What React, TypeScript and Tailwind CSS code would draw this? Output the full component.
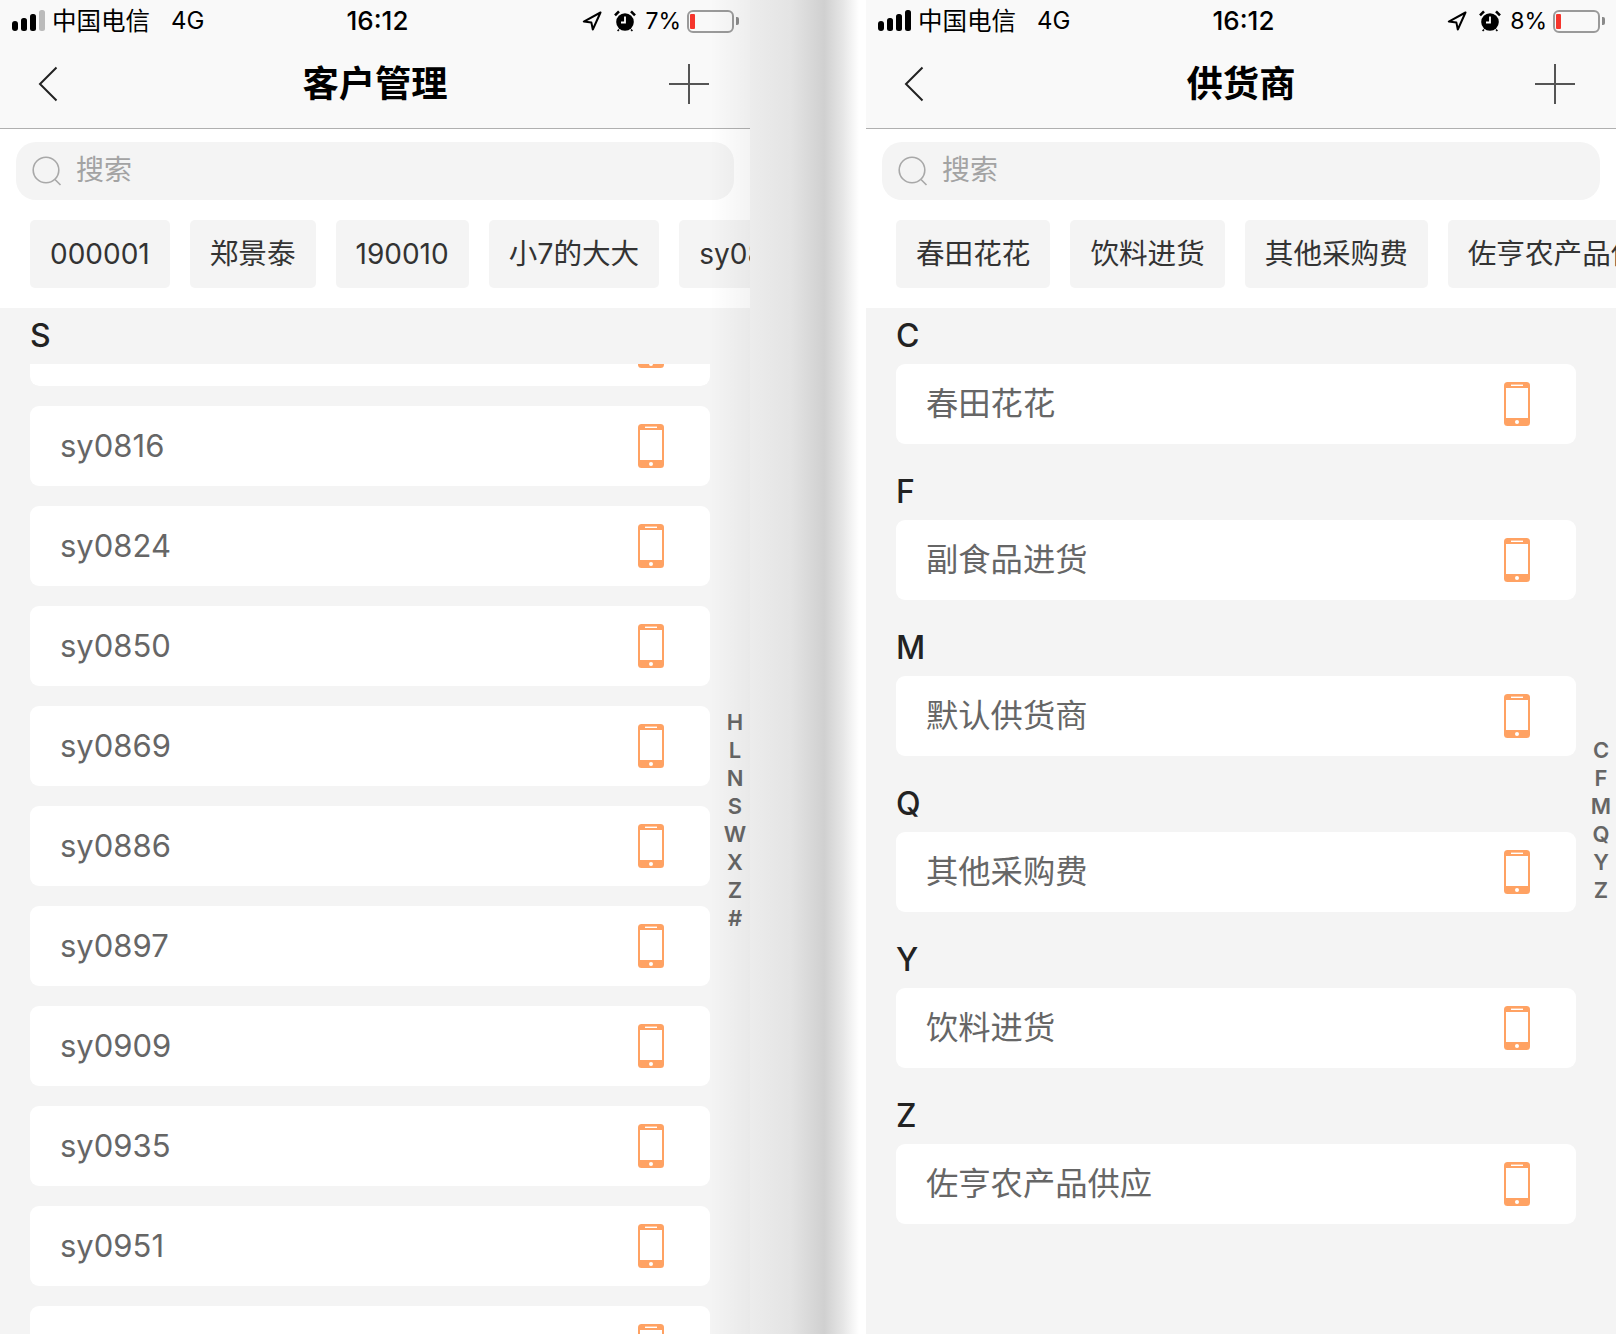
const FONT = "font-['Inter','Noto_Sans_CJK_SC',sans-serif]";

function SignalIcon({ full }: { full: boolean }) {
  return (
    <svg width="34" height="22" viewBox="0 0 34 22" className="shrink-0">
      <rect x="0" y="11" width="6" height="10" rx="3" fill="#000" />
      <rect x="9" y="8" width="6" height="13" rx="2.5" fill="#000" />
      <rect x="18" y="4" width="6" height="17" rx="2.5" fill="#000" />
      <rect x="27" y="0" width="6" height="21" rx="2.5" fill={full ? "#000" : "#bbb"} />
    </svg>
  );
}

function ArrowIcon() {
  return (
    <svg width="20" height="20" viewBox="0 0 20 20" className="shrink-0">
      <path d="M18.5 1.5 1.8 10.6l7.6 1 1.4 6.9z" fill="none" stroke="#000" strokeWidth="2" strokeLinejoin="round" />
    </svg>
  );
}

function AlarmIcon() {
  return (
    <svg width="22" height="22" viewBox="0 0 22 22" className="shrink-0">
      <circle cx="11" cy="12" r="8.8" fill="#000" />
      <path d="M11 6.5V12.5H7" fill="none" stroke="#fff" strokeWidth="1.8" />
      <path d="M1 5.4 5 1.4M21 5.4 17 1.4" fill="none" stroke="#000" strokeWidth="2.6" />
      <path d="M5 19.5 3.6 21M17 19.5 18.4 21" fill="none" stroke="#000" strokeWidth="1.6" />
    </svg>
  );
}

function BatteryIcon() {
  return (
    <div className="flex items-center gap-[2px]">
      <div className="flex h-[23px] w-[47px] items-center rounded-[6px] border-2 border-[#9a9a9a] pl-[1px]">
        <div className="h-[15px] w-[5px] rounded-[1px] bg-[#f5352c]" />
      </div>
      <div className="h-[8px] w-[3px] rounded-r-[2px] bg-[#8a8a8a]" />
    </div>
  );
}

function StatusBar({ battery, full }: { battery: string; full: boolean }) {
  return (
    <div className="grid h-10 grid-cols-[1fr_auto_1fr] items-center pl-3 pr-[11px] pt-[2px] text-[24.5px] leading-none text-black">
      <div className="flex items-center">
        <SignalIcon full={full} />
        <span className="ml-[6px]">中国电信</span>
        <span className="ml-[21px] text-[24px]">4G</span>
      </div>
      <span className="ml-[4px] text-[26px] font-medium">16:12</span>
      <div className="flex items-center justify-end">
        <ArrowIcon />
        <div className="ml-[12px]">
          <AlarmIcon />
        </div>
        <span className="ml-[9px] mr-[6px] text-[23px]">{battery}</span>
        <BatteryIcon />
      </div>
    </div>
  );
}

function NavBar({ title }: { title: string }) {
  return (
    <div className="grid h-[89px] grid-cols-[1fr_auto_1fr] items-center border-b border-[#b0b0b0] pl-[38px] pr-[41px]">
      <svg width="20" height="36" viewBox="0 0 20 36">
        <path d="M18.5 1.5 2 18l16.5 16.5" fill="none" stroke="#222" strokeWidth="2" />
      </svg>
      <h1 className="ml-[3px] text-[36.3px] font-bold leading-none text-black">{title}</h1>
      <svg width="40" height="40" viewBox="0 0 40 40" className="justify-self-end">
        <path d="M20 0v40M0 20h40" fill="none" stroke="#555" strokeWidth="2" />
      </svg>
    </div>
  );
}

function SearchBox() {
  return (
    <div className="mx-4 mt-[13px] flex h-[58px] items-center rounded-[20px] bg-[#f4f4f4] pl-4 text-[28px] text-[#a3a3a3]">
      <svg width="30" height="30" viewBox="0 0 30 30" className="shrink-0">
        <circle cx="14" cy="14" r="12.8" fill="none" stroke="#a8a8a8" strokeWidth="1.6" />
        <path d="M23 23.5 28.5 29" fill="none" stroke="#a8a8a8" strokeWidth="1.6" />
      </svg>
      <span className="mb-[2px] ml-[14px]">搜索</span>
    </div>
  );
}

function Chips({ items }: { items: string[] }) {
  return (
    <div className="flex gap-5 overflow-hidden pb-5 pl-[30px] pt-5">
      {items.map((item) => (
        <div
          key={item}
          className={`flex h-[68px] shrink-0 items-center rounded-[5px] bg-[#f4f4f4] px-5 text-[#333] ${
            /^[a-z0-9]+$/.test(item) ? "text-[28px]" : "text-[28.6px]"
          }`}
        >
          {item}
        </div>
      ))}
    </div>
  );
}

function PhoneIcon() {
  return (
    <svg width="26" height="44" viewBox="0 0 26 44" className="shrink-0">
      <rect width="26" height="44" rx="3.5" fill="#ffa263" />
      <rect x="2" y="6" width="22" height="30" fill="#fff" />
      <rect x="7" y="2.6" width="12" height="1.4" fill="#fff" />
      <circle cx="13" cy="40" r="2" fill="#fff" />
    </svg>
  );
}

function Row({ name, size }: { name: string; size: string }) {
  return (
    <div className={`flex h-20 shrink-0 items-center justify-between rounded-[9px] bg-white pl-[30px] pr-[46px] text-[#666] ${size}`}>
      <span>{name}</span>
      <PhoneIcon />
    </div>
  );
}

function SectionLabel({ letter }: { letter: string }) {
  return (
    <div className="flex h-14 items-center pl-[30px] text-[32px] font-[550] leading-none text-[#222]">
      {letter}
    </div>
  );
}

function LetterIndex({ letters }: { letters: string[] }) {
  return (
    <div className="absolute right-0 top-[820px] flex w-[30px] -translate-y-1/2 flex-col items-center text-[22px] font-semibold leading-[28px] text-[#666]">
      {letters.map((letter) => (
        <span key={letter}>{letter}</span>
      ))}
    </div>
  );
}

const customers = ["sy0816", "sy0824", "sy0850", "sy0869", "sy0886", "sy0897", "sy0909", "sy0935", "sy0951"];

const suppliers = [
  { letter: "C", name: "春田花花" },
  { letter: "F", name: "副食品进货" },
  { letter: "M", name: "默认供货商" },
  { letter: "Q", name: "其他采购费" },
  { letter: "Y", name: "饮料进货" },
  { letter: "Z", name: "佐亨农产品供应" },
];

function CustomerPanel() {
  return (
    <div className="relative h-full w-[750px] shrink-0 overflow-hidden bg-white">
      <div className="bg-[#f9f9f9]">
        <StatusBar battery="7%" full={false} />
        <NavBar title="客户管理" />
      </div>
      <SearchBox />
      <Chips items={["000001", "郑景泰", "190010", "小7的大大", "sy0816"]} />
      <div className="h-full bg-[#f4f4f4]">
        <SectionLabel letter="S" />
        <div className="flex flex-col gap-5 pl-[30px] pr-[40px]">
          {/* first row is scrolled under the section label */}
          <div className="flex h-[22px] flex-col justify-end overflow-hidden rounded-b-[9px]">
            <Row name="" size="text-[31px]" />
          </div>
          {customers.map((name) => (
            <Row key={name} name={name} size="text-[31px]" />
          ))}
          {/* last row only shows its top edge, its name is below the fold */}
          <Row name="" size="text-[31px]" />
        </div>
      </div>
      <LetterIndex letters={["H", "L", "N", "S", "W", "X", "Z", "#"]} />
      <div className="pointer-events-none absolute inset-y-0 right-0 w-[40px] bg-gradient-to-r from-transparent to-black/[0.045]" />
    </div>
  );
}

function SupplierPanel() {
  return (
    <div className="relative h-full w-[750px] shrink-0 overflow-hidden bg-white">
      <div className="bg-[#f9f9f9]">
        <StatusBar battery="8%" full={true} />
        <NavBar title="供货商" />
      </div>
      <SearchBox />
      <Chips items={["春田花花", "饮料进货", "其他采购费", "佐亨农产品供应"]} />
      <div className="h-full bg-[#f4f4f4]">
        {suppliers.map((s) => (
          <div key={s.letter} className="pb-5">
            <SectionLabel letter={s.letter} />
            <div className="pl-[30px] pr-[40px]">
              <Row name={s.name} size="text-[32.3px]" />
            </div>
          </div>
        ))}
      </div>
      <LetterIndex letters={["C", "F", "M", "Q", "Y", "Z"]} />
    </div>
  );
}

export default function App() {
  return (
    <div className={`flex h-[1334px] w-[1616px] overflow-hidden bg-white ${FONT}`}>
      <CustomerPanel />
      <div className="h-full w-[116px] shrink-0 bg-[linear-gradient(90deg,#ececec_0%,#e4e4e4_35%,#d0d0d0_64%,#e6e6e6_80%,#ffffff_94%)]" />
      <SupplierPanel />
    </div>
  );
}
